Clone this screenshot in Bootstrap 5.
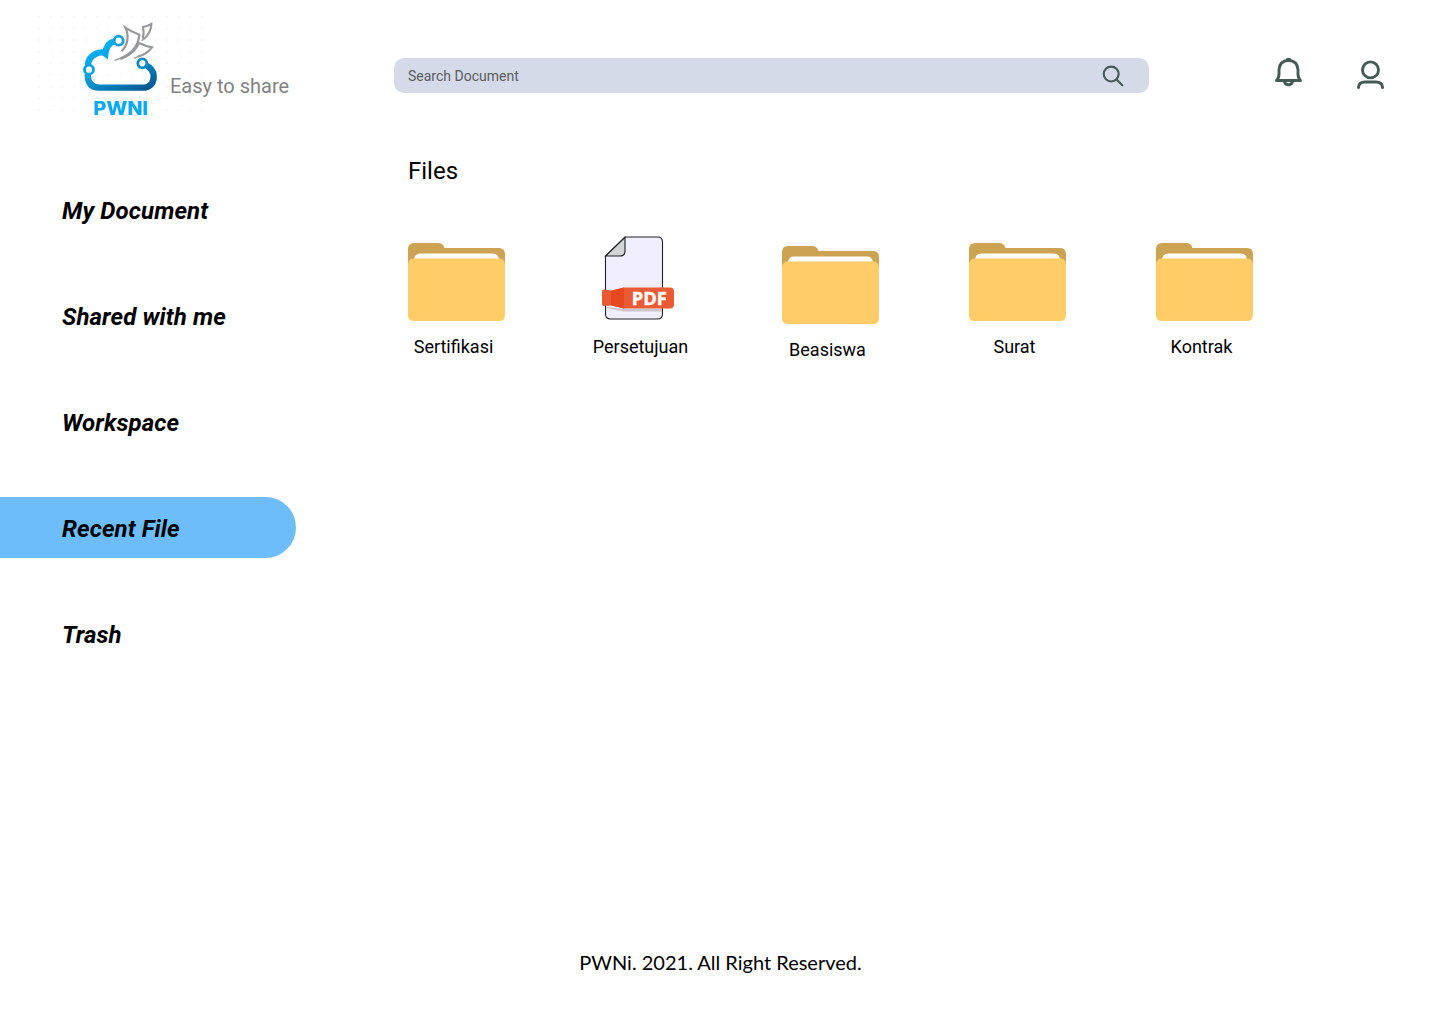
<!DOCTYPE html>
<html lang="id">
<head>
<meta charset="utf-8">
<meta name="viewport" content="width=device-width, initial-scale=1">
<title>PWNI - Recent File</title>
<link href="https://cdn.jsdelivr.net/npm/bootstrap@5.3.0/dist/css/bootstrap.min.css" rel="stylesheet">
<style>
body{font-family:Roboto,"Liberation Sans",sans-serif;color:#000;background:#fff;height:1024px;overflow:hidden}
.topbar{height:130px}
.brand-area{width:394px;padding-left:33px}
.brand-logo{width:172px;height:115px;margin-top:10px;flex:none}
.tagline{font-size:20px;line-height:24px;color:#828282;margin:74px 0 0 -35px;white-space:nowrap}
.search-box{width:755px;height:35px;margin-top:58px;padding:0 24px 0 14px;background:#d4dae8;border-radius:10px}
.search-box input{font-size:14px;line-height:20px;color:#4f4f4f;height:35px;padding-top:1px!important}
.search-box input::placeholder{color:#5a5c60;opacity:1}
.top-actions{margin:56px 54px 0 125px;gap:53px}
.sidebar{width:360px;padding-top:49px;gap:45px}
.sidebar .nav-link{width:296px;height:61px;padding:3px 0 0 62px;font-size:24px;line-height:28px;letter-spacing:.1px;font-weight:700;font-style:italic;color:#000}
.sidebar .nav-link.active{background:#6cbdf9;border-radius:0 31px 31px 0}
.files-title{font-size:24px;line-height:28px;font-weight:400;margin:27px 0 0 48px}
.file-list{margin-top:47px}
.file-tile{width:187px;color:#000;font-size:18px;line-height:22px}
.file-art{height:104px;padding-left:48px}
.pdf-art{padding-left:33px}
.shifted{padding-top:3px}
.page-foot{font-family:Lato,sans-serif;font-size:20px;line-height:24px;padding:0 0 50px 1px}
</style>
<script src="https://cdn.jsdelivr.net/npm/bootstrap@5.3.0/dist/js/bootstrap.bundle.min.js" defer></script>
</head>
<body class="d-flex flex-column">
<svg width="0" height="0" class="d-none" aria-hidden="true">
  <symbol id="folder" viewBox="0 0 97 78">
    <path fill="#cca352" d="M0 50V6Q0 0 6 0H30Q35 0 36.500 5H91Q97 5 97 11V50Z"/>
    <path fill="#fff" d="M6 20V16Q7 10.500 12 10.500H85Q90 10.500 91 16V20Z"/>
    <path fill="#ffcc67" d="M0 20.500Q1 15.500 6 15.500H91Q96 15.500 97 20.500V72Q97 78 91 78H6Q0 78 0 72Z"/>
  </symbol>
</svg>
<header class="topbar d-flex align-items-start">
  <div class="brand-area d-flex">
    <svg class="brand-logo" viewBox="-111 0 516 345" role="img" aria-label="PWNI">
      <defs>
        <linearGradient id="cloud" gradientUnits="userSpaceOnUse" x1="110" y1="100" x2="185" y2="255"><stop offset="0" stop-color="#00aef3"/><stop offset=".4" stop-color="#0b9edb"/><stop offset="1" stop-color="#025b98"/></linearGradient>
        <pattern id="dots" patternUnits="userSpaceOnUse" x="-99" y="15" width="34.900" height="34.900"><rect x="4" y="4" width="3" height="3" fill="#dadada"/></pattern>
      </defs>
      <rect x="-99" y="15" width="500" height="300" fill="url(#dots)"/>
      <g fill="none" stroke="url(#cloud)">
        <path stroke-width="19" d="M134 94Q109 99 106 131Q95 123 78 131Q54 143 54 166M53 193Q53 233 88 233H216C244 233 252 215 251 197Q249 177 231 167"/>
        <g stroke="#0aa2e3" stroke-width="8.500" fill="#fff"><circle cx="146" cy="92" r="13.500"/><circle cx="57" cy="179" r="13.500"/></g>
        <circle cx="217" cy="160" r="13.500" stroke="#0789c7" stroke-width="8.500" fill="#fff"/>
      </g>
      <g fill="none" stroke="#96989b" stroke-width="6.500" stroke-linejoin="miter">
        <path d="M155 124Q184 92 166 53Q183 65 208 74Q204 123 152 145"/>
        <path d="M218 86Q223 68 219 51Q234 48 244 42Q244 67 222 87"/>
        <path d="M166 141Q198 124 207 99Q225 108 246 112Q230 133 204 140"/>
        <path stroke-width="4" d="M134 151L154 144M168 140L152 149M222 86L215 92M205 139L192 145"/>
      </g>
      <text x="70" y="314.500" font-family="Inter,Lato,sans-serif" font-weight="800" font-size="55" fill="#08a9ef" textLength="164" lengthAdjust="spacingAndGlyphs">PWNI</text>
    </svg>
    <div class="tagline">Easy to share</div>
  </div>
  <div class="search-box d-flex align-items-center">
    <input class="form-control border-0 bg-transparent p-0 shadow-none flex-grow-1" type="text" placeholder="Search Document" aria-label="Search Document">
    <svg width="24" height="24" viewBox="0 0 24 24" fill="none" stroke="#455a54" stroke-width="2.200" stroke-linecap="round"><circle cx="9.500" cy="10" r="7.700"/><path d="M15 15.500L21 21.500"/></svg>
  </div>
  <div class="top-actions d-flex">
    <svg width="29" height="34" viewBox="0 0 29 34" fill="none" stroke="#455a54" stroke-width="2.900" stroke-linejoin="round" stroke-linecap="round"><path d="M2.500 24.500Q5 22 5 18V13.500Q5.500 5 14.500 4.200Q23.500 5 24 13.500V18Q24 22 26.500 24.500ZM10.500 25.500Q11 28.700 14.500 28.700T18.500 25.500"/><path d="M13.500 3.500H15.500"/></svg>
    <svg width="29" height="36" viewBox="0 0 29 36" fill="none" stroke="#455a54" stroke-width="2.900" stroke-linecap="round"><circle cx="14.500" cy="13.900" r="8"/><path d="M2.400 31.600Q2.700 26 9 26H20Q26.300 26 26.600 31.600"/></svg>
  </div>
</header>
<div class="d-flex flex-grow-1">
  <nav class="sidebar nav flex-column flex-nowrap" aria-label="Menu">
    <a class="nav-link d-flex align-items-center" href="#">My Document</a>
    <a class="nav-link d-flex align-items-center" href="#">Shared with me</a>
    <a class="nav-link d-flex align-items-center" href="#">Workspace</a>
    <a class="nav-link active d-flex align-items-center" href="#" aria-current="page">Recent File</a>
    <a class="nav-link d-flex align-items-center" href="#">Trash</a>
  </nav>
  <main class="flex-grow-1">
    <h1 class="files-title">Files</h1>
    <div class="file-list d-flex">
      <a href="#" class="file-tile text-decoration-none text-center"><div class="file-art text-start"><svg class="mt-2" width="97" height="84" viewBox="0 -3 97 84"><use href="#folder" width="97" height="78"/></svg></div>Sertifikasi</a>
      <a href="#" class="file-tile text-decoration-none text-center"><div class="file-art pdf-art text-start">
        <svg width="110" height="100" viewBox="-17 4 110 100">
          <path d="M28 9H60.500Q65.500 9 65.500 14V86Q65.500 91 60.500 91H13.500Q8.500 91 8.500 86V28Z" fill="#f0eeff" stroke="#202124" stroke-width="1.100"/>
          <path d="M28 9.300V23Q28 28 23 28H8.700Z" fill="#d3d4d5" stroke="#202124" stroke-width="1.100"/>
          <path d="M9 79L27 81H65V83.500H27L9 80Z" fill="#b9b5b5" opacity=".7"/>
          <path d="M5 63Q5 61.500 7 61.500L14 62.500L27 59.500H73Q77 59.500 77 63.500V76.500Q77 80.500 73 80.500H27L14 77.500L7 78Q5 78 5 76Z" fill="#e95a35"/>
          <path d="M14 63L27 59.500V80.500L14 77Z" fill="#e8481d"/>
          <text x="34.700" y="76.500" font-family="Open Sans,Noto Sans,sans-serif" font-weight="700" font-size="18" fill="#fff" stroke="#fff" stroke-width=".4" textLength="35" lengthAdjust="spacingAndGlyphs">PDF</text>
        </svg></div>Persetujuan</a>
      <a href="#" class="file-tile shifted text-decoration-none text-center"><div class="file-art text-start"><svg class="mt-2" width="97" height="84" viewBox="0 -3 97 84"><use href="#folder" width="97" height="78"/></svg></div>Beasiswa</a>
      <a href="#" class="file-tile text-decoration-none text-center"><div class="file-art text-start"><svg class="mt-2" width="97" height="84" viewBox="0 -3 97 84"><use href="#folder" width="97" height="78"/></svg></div>Surat</a>
      <a href="#" class="file-tile text-decoration-none text-center"><div class="file-art text-start"><svg class="mt-2" width="97" height="84" viewBox="0 -3 97 84"><use href="#folder" width="97" height="78"/></svg></div>Kontrak</a>
    </div>
  </main>
</div>
<footer class="page-foot text-center">PWNi. 2021. All Right Reserved.</footer>
</body>
</html>
